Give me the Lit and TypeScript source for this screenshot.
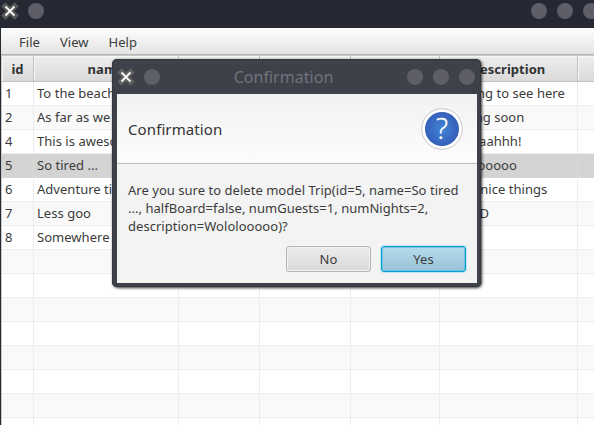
import { LitElement, html, css, svg } from "lit";
import { customElement } from "lit/decorators.js";
import { classMap } from "lit/directives/class-map.js";

interface Trip {
  id: number;
  name: string;
  description: string;
}

const TRIPS: Trip[] = [
  { id: 1, name: "To the beach", description: "Nothing to see here" },
  { id: 2, name: "As far as we can", description: "Coming soon" },
  { id: 4, name: "This is awesome", description: "Yeaaaaahhh!" },
  { id: 5, name: "So tired ...", description: "Wololooooo" },
  { id: 6, name: "Adventure time", description: "Many nice things" },
  { id: 7, name: "Less goo", description: "Yeah :D" },
  { id: 8, name: "Somewhere else", description: "" },
];

const ROW_COUNT = 15;
const SELECTED_ID = 5;

@customElement("window-close")
class WindowClose extends LitElement {
  static styles = css`
    :host { display: block; width: 18px; height: 18px; }
    svg { display: block; overflow: visible; }
    .glow { stroke: #75746c; stroke-width: 6; opacity: 0.65; filter: blur(0.7px); }
    .cross { stroke: #ffffff; stroke-width: 1.9; }
  `;
  render() {
    return html`<svg width="18" height="18" viewBox="0 0 18 18" fill="none" stroke-linecap="square">
      ${svg`<path class="glow" d="M4.5 4.5 L13.5 13.5 M13.5 4.5 L4.5 13.5"/><path class="cross" d="M5.2 5.2 L12.8 12.8 M12.8 5.2 L5.2 12.8"/>`}
    </svg>`;
  }
}

@customElement("confirm-dialog")
class ConfirmDialog extends LitElement {
  static styles = css`
    :host {
      display: flex; flex-direction: column; box-sizing: border-box;
      width: 369px; height: 228px; padding: 0 4px 4px 5px;
      background: #3e414a; border-radius: 5px;
      box-shadow: 1px 1px 3px rgba(0, 0, 0, 0.8), inset 0 0 0 1px #343740;
    }
    .title { display: flex; align-items: center; height: 35px; flex: none; }
    .dot { width: 16px; height: 16px; border-radius: 50%; background: #5d5e67; flex: none; }
    .title .dot.menu { margin-left: 9px; }
    .caption { flex: 1; text-align: center; font-size: 16px; color: #71727c; }
    .title .dot + .dot { margin-left: 10px; }
    .title .dot:last-child { margin-right: 2px; }
    .head {
      display: flex; align-items: center; justify-content: space-between; flex: none;
      height: 70px; box-sizing: border-box; padding: 0 14px 0 11px;
      border-bottom: 1px solid #bfbfbf; background: linear-gradient(#f2f2f2, #fcfcfc);
      font-size: 15px; letter-spacing: 0.1px; color: #333333;
    }
    .body {
      display: flex; flex-direction: column; flex: 1; background: #f3f3f3;
      padding: 17px 11px 0; font-size: 13px; line-height: 18px; color: #3b3b3b;
    }
    .line { white-space: nowrap; }
    .buttons { display: flex; justify-content: flex-end; gap: 10px; margin-top: 11px; }
    .button {
      display: flex; align-items: center; justify-content: center; box-sizing: border-box;
      width: 85px; height: 26px; border: 1px solid #b4b4b4; border-radius: 3px;
      background: linear-gradient(#ececec, #d9d9d9); box-shadow: inset 0 0 0 1px #f2f2f2;
    }
    .button.primary {
      border-color: #039ed3; background: linear-gradient(#b4dcec, #98c2d6);
      box-shadow: 0 0 0 1px #c0e6f3, inset 0 0 0 1px #72c2de;
    }
    .qmark { font-family: "Open Sans", "Noto Sans", sans-serif; font-weight: 300; font-size: 28.5px; fill: #ffffff; stroke: #ffffff; stroke-width: 0.4px; }
  `;
  render() {
    return html`
      <div class="title">
        <window-close></window-close>
        <div class="dot menu"></div>
        <div class="caption">Confirmation</div>
        <div class="dot"></div><div class="dot"></div><div class="dot"></div>
      </div>
      <div class="head">
        <span>Confirmation</span>
        <svg width="42" height="42" viewBox="0 0 42 42">
          <defs><radialGradient id="blue"><stop offset="0" stop-color="#4384d8"/><stop offset="1" stop-color="#345fb8"/></radialGradient></defs>
          <circle cx="21" cy="21" r="20.3" fill="#ffffff" stroke="#c8c8c8"/>
          <circle cx="21" cy="21" r="17" fill="url(#blue)"/>
          <text class="qmark" x="21" y="31" text-anchor="middle">?</text>
        </svg>
      </div>
      <div class="body">
        <div class="line">Are you sure to delete model Trip(id=5, name=So tired</div>
        <div class="line">..., halfBoard=false, numGuests=1, numNights=2,</div>
        <div class="line">description=Wololooooo)?</div>
        <div class="buttons">
          <div class="button">No</div>
          <div class="button primary">Yes</div>
        </div>
      </div>`;
  }
}

@customElement("app-root")
class AppRoot extends LitElement {
  static styles = css`
    :host {
      display: flex; flex-direction: column; position: relative; box-sizing: border-box;
      width: 594px; height: 425px; overflow: hidden; padding-left: 1px;
      background: #262933; font-family: "Noto Sans", sans-serif; font-size: 13px;
      letter-spacing: 0.03px; color: #3b3b3b;
    }
    .title {
      display: flex; align-items: center; height: 28px; flex: none; box-sizing: border-box;
      padding-bottom: 6px; background: #262933;
    }
    .dot { width: 16px; height: 16px; border-radius: 50%; background: #5d5e67; flex: none; }
    .title .menu { margin-left: 9px; }
    .title .dot + .dot { margin-left: 10px; }
    .title .menu + .dot { margin-left: auto; }
    .title .dot:last-child { margin-right: -5px; }
    .menubar {
      display: flex; gap: 20px; align-items: center; height: 27px; flex: none; box-sizing: border-box;
      padding: 1px 0 0 18px; border-bottom: 1px solid #b4b4b4;
      background: linear-gradient(#fdfdfd, #e3e3e3);
    }
    .table {
      flex: 1; overflow: hidden; background: #ffffff;
      border-left: 1px solid #c8c8c8; border-top: 1px solid #c8c8c8;
    }
    .row { display: grid; grid-template-columns: 32px 145px 81px 91px 89px 138px 1fr; height: 24px; }
    .cell {
      box-sizing: border-box; border-right: 1px solid #ededed; border-bottom: 1px solid #ededed;
      padding-left: 3px; line-height: 23px; white-space: nowrap; overflow: hidden;
    }
    .cell:last-child { border-right: 0; }
    .odd { background: #f9f9f9; }
    .selected { background: #d3d3d3; }
    .selected .cell { border-color: #d9d9d9; }
    .header { height: 26px; background: linear-gradient(#eeeeee, #d9d9d9); font-weight: bold; color: #333333; }
    .header .cell {
      padding: 0; text-align: center; line-height: 26px; border-color: #c0c0c0;
      box-shadow: inset 1px 1px 0 #f6f6f6;
    }
    .dialog { position: absolute; left: 112px; top: 59px; }
  `;
  private renderRow(index: number) {
    const trip = TRIPS[index];
    const selected = trip?.id === SELECTED_ID;
    const cells = [trip?.id, trip?.name, "", "", "", trip?.description, ""];
    return html`<div class=${classMap({ row: true, odd: index % 2 === 1 && !selected, selected })}>
      ${cells.map((c) => html`<div class="cell">${c}</div>`)}
    </div>`;
  }
  render() {
    return html`
      <div class="title">
        <window-close></window-close>
        <div class="dot menu"></div>
        <div class="dot"></div><div class="dot"></div><div class="dot"></div>
      </div>
      <div class="menubar"><span>File</span><span>View</span><span>Help</span></div>
      <div class="table">
        <div class="row header">
          ${["id", "name", "", "", "", "description", ""].map((h) => html`<div class="cell">${h}</div>`)}
        </div>
        ${Array.from({ length: ROW_COUNT }, (_, i) => this.renderRow(i))}
      </div>
      <confirm-dialog class="dialog"></confirm-dialog>`;
  }
}
